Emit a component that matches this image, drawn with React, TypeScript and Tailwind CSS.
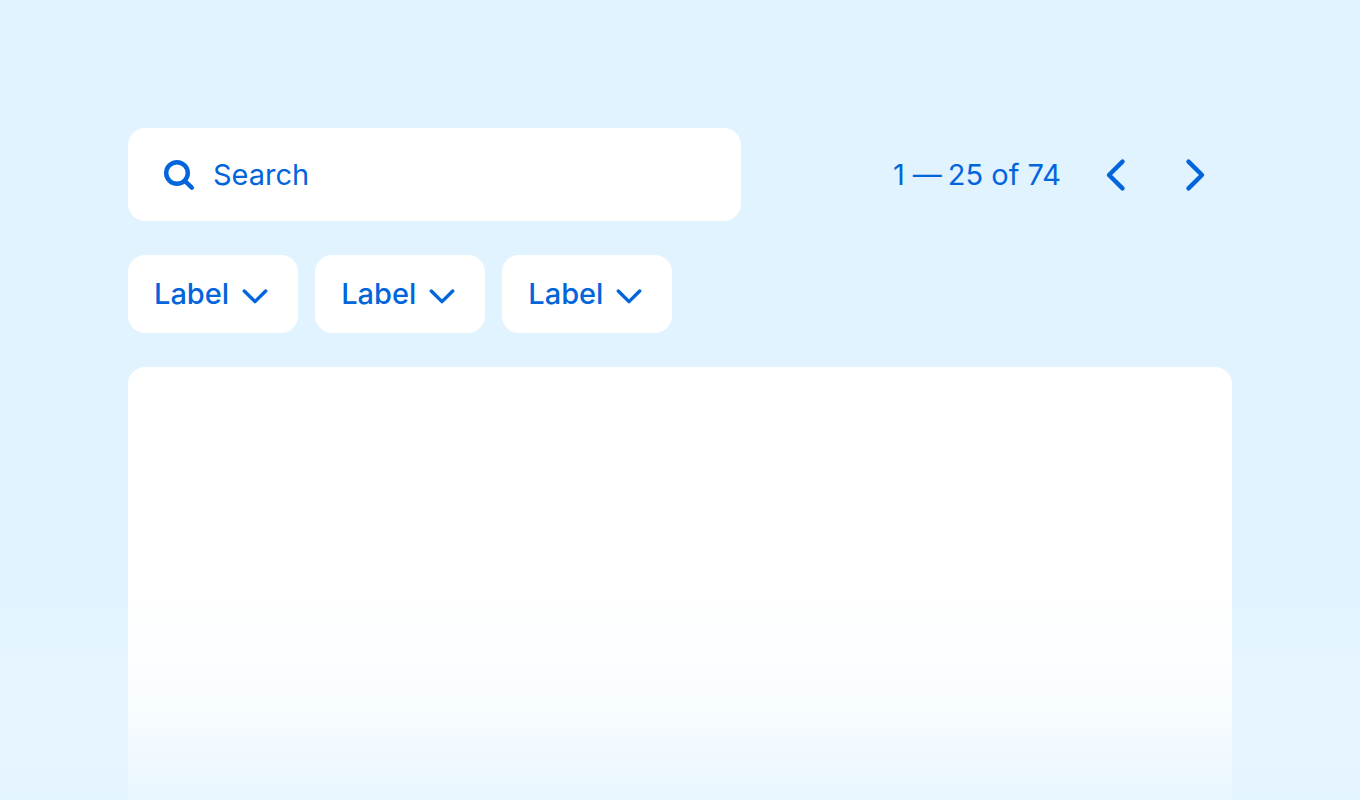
import React from "react";

const filters = ["Label", "Label", "Label"];

function SearchIcon() {
  return (
    <svg viewBox="0 0 34 34" className="h-[34px] w-[34px] shrink-0" fill="none" stroke="currentColor" strokeWidth="4.4" strokeLinecap="round" aria-hidden="true">
      <circle cx="15" cy="15" r="10.8" />
      <path d="M23 23L29.8 29.6" />
    </svg>
  );
}

function ChevronDown() {
  return (
    <svg viewBox="0 0 26 26" className="h-[26px] w-[26px]" fill="none" stroke="currentColor" strokeWidth="3.4" strokeLinecap="round" strokeLinejoin="round" aria-hidden="true">
      <path d="M2.3 10L13 20.6L23.7 10" />
    </svg>
  );
}

function PageChevron({ direction }: { direction: "previous" | "next" }) {
  return (
    <svg viewBox="0 0 34 34" className="h-[34px] w-[34px]" fill="none" stroke="currentColor" strokeWidth="4.4" strokeLinecap="round" strokeLinejoin="round" aria-hidden="true">
      <path d={direction === "previous" ? "M23.5 3.6L10 17L23.5 30.4" : "M10.5 3.6L24 17L10.5 30.4"} />
    </svg>
  );
}

export default function App() {
  return (
    <main className="flex min-h-screen flex-col bg-[linear-gradient(to_bottom,#e0f3ff_0,#e0f3ff_570px,#e6f5ff_670px,#e6f5ff_740px,#e4f4ff_800px)] px-32 pt-32 font-['Inter','Liberation_Sans',sans-serif] text-[29px] leading-9 text-[#0265dc]">
      <div className="flex items-center justify-between">
        <label className="flex h-[93px] w-5/9 items-center gap-[17px] rounded-[17px] bg-white px-[34px]">
          <SearchIcon />
          <input
            type="search"
            aria-label="Search"
            placeholder="Search"
            className="h-full min-w-0 flex-1 bg-transparent outline-none placeholder:text-[#0265dc]"
          />
        </label>
        <nav aria-label="Pagination" className="flex items-center pr-5">
          <p className="flex whitespace-nowrap">
            <span>1</span>
            <span className="pr-1.5 pl-2">—</span>
            <span>25 of 74</span>
          </p>
          <div className="ml-[38px] flex gap-[45px]">
            <button type="button" aria-label="Previous page">
              <PageChevron direction="previous" />
            </button>
            <button type="button" aria-label="Next page">
              <PageChevron direction="next" />
            </button>
          </div>
        </nav>
      </div>
      <div className="mt-[34px] flex gap-[17px]">
        {filters.map((label, index) => (
          <button
            key={index}
            type="button"
            className="flex h-[78px] items-center gap-[13px] rounded-[17px] bg-white pr-[30px] pl-[26px] font-medium"
          >
            {label}
            <ChevronDown />
          </button>
        ))}
      </div>
      <section
        aria-label="Results"
        className="mt-[34px] flex-1 rounded-t-[17px] bg-[linear-gradient(to_bottom,#ffffff_0,#ffffff_210px,#fcfeff_290px,#f7fcff_350px,#f0f8ff_395px,#e8f7ff_433px)]"
      />
    </main>
  );
}
